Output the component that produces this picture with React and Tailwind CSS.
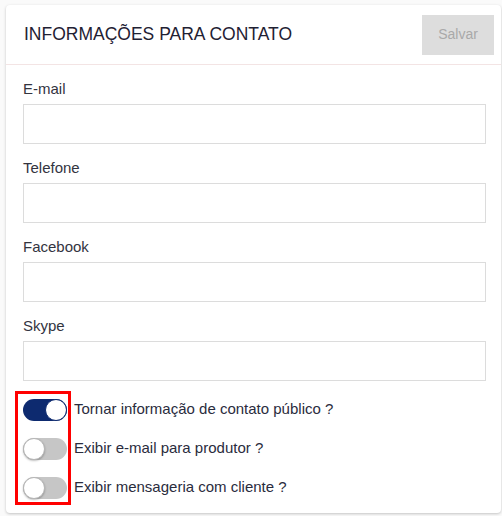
import React, { useState } from 'react';

const fields = ['E-mail', 'Telefone', 'Facebook', 'Skype'];

const Toggle = ({ on, onChange }) => (
  <button
    type="button"
    onClick={onChange}
    className={`relative h-[22px] w-[44px] shrink-0 rounded-full ${on ? 'bg-[#0d2a6f]' : 'bg-[#c6c6c6]'}`}
  >
    <span
      className={`absolute top-0 h-[22px] w-[22px] rounded-full bg-white border ${
        on ? 'right-0 border-[#0d2a6f]' : 'left-0 border-[#b5b5b5] shadow-[0_1px_2px_rgba(0,0,0,0.25)]'
      }`}
    />
  </button>
);

const App = () => {
  const [values, setValues] = useState({});
  const [toggles, setToggles] = useState([true, false, false]);

  const labels = [
    'Tornar informação de contato público ?',
    'Exibir e-mail para produtor ?',
    'Exibir mensageria com cliente ?'
  ];

  const flip = (i) => setToggles((t) => t.map((v, j) => (j === i ? !v : v)));

  return (
    <div
      className="min-h-screen bg-[#fafafa] pl-[6px] pt-[5px] pr-px"
      style={{ fontFamily: '"Liberation Sans", Arial, sans-serif' }}
    >
      <div className="w-[495px] rounded-[4px] bg-white shadow-[0_1px_3px_rgba(0,0,0,0.22)]">
        {/* header */}
        <div className="flex h-[60px] items-center justify-between border-b border-[#f3e4e4] pl-[18px] pr-[7px]">
          <h2 className="text-[17.5px] text-[#1f2133]">INFORMAÇÕES PARA CONTATO</h2>
          <button
            type="button"
            disabled
            className="h-[40px] w-[72px] bg-[#dddddd] text-[14px] text-[#a9a9a9]"
          >
            Salvar
          </button>
        </div>

        {/* body */}
        <div className="pl-[17px] pr-[15px] pt-[15px] pb-[6px]">
          {fields.map((f) => (
            <div key={f} className="mb-[15px]">
              <label className="mb-[7px] block text-[15px] leading-[17px] text-[#33343f]">{f}</label>
              <input
                value={values[f] || ''}
                onChange={(e) => setValues({ ...values, [f]: e.target.value })}
                className="block h-[40px] w-full border border-[#dcdcdc] px-2 text-[15px] outline-none"
              />
            </div>
          ))}

          <div className="relative -mt-[6px]">
            {/* annotation box around the switches */}
            <div className="pointer-events-none absolute left-[-8px] top-[1px] h-[114px] w-[56px] border-[3px] border-[#ff0000]" />
            {labels.map((l, i) => (
              <div key={l} className="flex h-[39px] items-center gap-[7px]">
                <Toggle on={toggles[i]} onChange={() => flip(i)} />
                <span className="text-[15px] text-[#2a2c3d]">{l}</span>
              </div>
            ))}
          </div>
        </div>
      </div>
    </div>
  );
};

export default App;
